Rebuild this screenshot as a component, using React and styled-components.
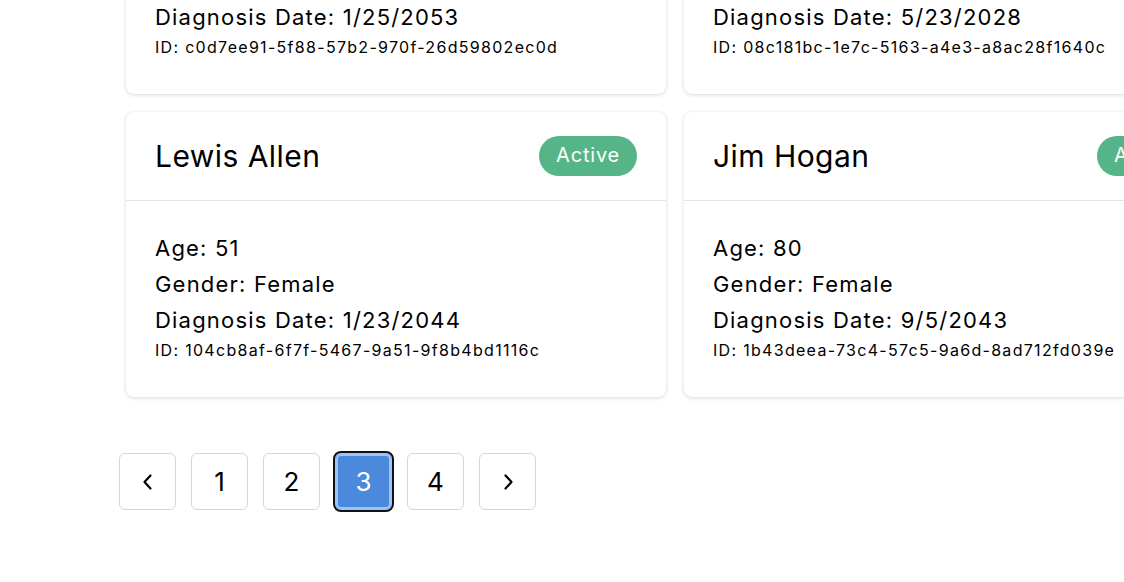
import React from "react";
import styled, { createGlobalStyle } from "styled-components";

const GlobalStyle = createGlobalStyle`
  html, body {
    margin: 0;
    padding: 0;
    background: #ffffff;
    overflow: hidden;
  }
  body {
    font-family: Inter, "Noto Sans", "Liberation Sans", sans-serif;
    color: #000;
  }
`;

const Page = styled.main`
  width: 1124px;
  height: 582px;
  overflow: hidden;
`;

const Scroller = styled.div`
  margin-top: -191px;
  padding-left: 119px;
  display: flex;
  flex-direction: column;
  gap: 56px;
`;

const Grid = styled.div`
  display: grid;
  grid-template-columns: repeat(2, 540px);
  gap: 18px;
  padding-left: 7px;
`;

const Card = styled.article`
  background: #fff;
  border-radius: 8px;
  box-shadow: 0 1px 4px rgba(0, 0, 0, 0.14), 0 0 1px rgba(0, 0, 0, 0.08);
  display: flex;
  flex-direction: column;
`;

const Header = styled.header`
  height: 88px;
  padding: 0 29px;
  display: flex;
  align-items: center;
  justify-content: space-between;
  border-bottom: 1px solid #e3e3e8;
`;

const Name = styled.h2`
  margin: 0;
  font-size: 30px;
  font-weight: 400;
  line-height: normal;
  letter-spacing: 0.45px;
`;

const Badge = styled.span`
  height: 40px;
  padding: 1px 17px 0;
  border-radius: 20px;
  background: ${(p) => (p.$active ? "#56b588" : "#c9c9cf")};
  color: #fff;
  font-size: 20px;
  line-height: 36px;
  letter-spacing: 0.8px;
  display: inline-flex;
  align-items: flex-start;
  box-sizing: border-box;
`;

const Body = styled.div`
  padding: 29px 29px 35px;
`;

const Line = styled.p`
  margin: 0;
  font-size: 22px;
  line-height: 36px;
  letter-spacing: 1.2px;
`;

const Id = styled.p`
  margin: 0;
  font-size: 16px;
  line-height: 24px;
  letter-spacing: 1.3px;
`;

const Pager = styled.nav`
  display: flex;
  gap: 15px;
  align-items: center;
`;

const PageButton = styled.button`
  width: 57px;
  height: 57px;
  box-sizing: border-box;
  border-radius: 6px;
  border: 1px solid ${(p) => (p.$current ? "#9fc3f6" : "#d6d6da")};
  background: ${(p) => (p.$current ? "#4a89dc" : "#fff")};
  color: ${(p) => (p.$current ? "#fff" : "#000")};
  font-family: Inter, "Noto Sans", sans-serif;
  font-size: 26px;
  display: flex;
  align-items: center;
  justify-content: center;
  padding: 0;
  ${(p) =>
    p.$current &&
    `
    box-shadow: inset 0 0 0 2px #9fc3f6;
    outline: 2px solid #111;
    outline-offset: 0;
  `}
`;

const Chevron = ({ dir }) => (
  <svg width="14" height="18" viewBox="0 0 14 18" fill="none">
    <path
      d={dir === "left" ? "M9.5 2.5 L3.5 9 L9.5 15.5" : "M4.5 2.5 L10.5 9 L4.5 15.5"}
      stroke="#000"
      strokeWidth="2.2"
      strokeLinecap="round"
      strokeLinejoin="round"
    />
  </svg>
);

const patients = [
  { name: "Mary Lopez", age: 34, gender: "Male", date: "1/25/2053", id: "c0d7ee91-5f88-57b2-970f-26d59802ec0d" },
  { name: "Carl Ramos", age: 62, gender: "Female", date: "5/23/2028", id: "08c181bc-1e7c-5163-a4e3-a8ac28f1640c" },
  { name: "Lewis Allen", age: 51, gender: "Female", date: "1/23/2044", id: "104cb8af-6f7f-5467-9a51-9f8b4bd1116c" },
  { name: "Jim Hogan", age: 80, gender: "Female", date: "9/5/2043", id: "1b43deea-73c4-57c5-9a6d-8ad712fd039e" },
];

export default function App() {
  return (
    <Page>
      <GlobalStyle />
      <Scroller>
        <Grid>
          {patients.map((p) => (
            <Card key={p.id}>
              <Header>
                <Name>{p.name}</Name>
                <Badge $active>Active</Badge>
              </Header>
              <Body>
                <Line>Age: {p.age}</Line>
                <Line>Gender: {p.gender}</Line>
                <Line>Diagnosis Date: {p.date}</Line>
                <Id>ID: {p.id}</Id>
              </Body>
            </Card>
          ))}
        </Grid>
        <Pager>
          <PageButton aria-label="Previous">
            <Chevron dir="left" />
          </PageButton>
          {[1, 2, 3, 4].map((n) => (
            <PageButton key={n} $current={n === 3}>
              {n}
            </PageButton>
          ))}
          <PageButton aria-label="Next">
            <Chevron dir="right" />
          </PageButton>
        </Pager>
      </Scroller>
    </Page>
  );
}
